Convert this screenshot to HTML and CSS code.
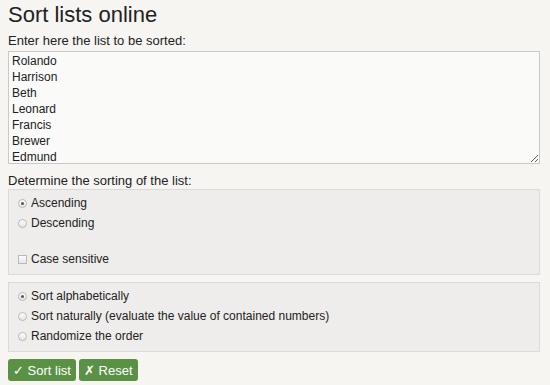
FILE: index.html
```html
<!DOCTYPE html>
<html lang="en">
<head>
  <meta charset="UTF-8">
  <meta name="viewport" content="width=device-width, initial-scale=1.0">
  <title>Sort lists online</title>
  <link rel="stylesheet" href="styles.css">
</head>
<body>
  <div class="page">
    <h1>Sort lists online</h1>
    <form id="sortForm">
      <label class="field-label" for="list">Enter here the list to be sorted:</label>
      <textarea id="list" name="list">Rolando
Harrison
Beth
Leonard
Francis
Brewer
Edmund</textarea>

      <div class="field-label sorting-label">Determine the sorting of the list:</div>
      <div class="panel">
        <label class="option"><input type="radio" name="order" value="asc" checked> Ascending</label>
        <label class="option"><input type="radio" name="order" value="desc"> Descending</label>
        <label class="option option-spaced"><input type="checkbox" name="case"> Case sensitive</label>
      </div>

      <div class="panel">
        <label class="option"><input type="radio" name="mode" value="alpha" checked> Sort alphabetically</label>
        <label class="option"><input type="radio" name="mode" value="natural"> Sort naturally (evaluate the value of contained numbers)</label>
        <label class="option"><input type="radio" name="mode" value="random"> Randomize the order</label>
      </div>

      <div class="buttons">
        <button type="submit">&#10003; Sort list</button>
        <button type="reset">&#10007; Reset</button>
      </div>
    </form>
  </div>
</body>
</html>
```

FILE: styles.css
```css
body {
  font-family: 'Liberation Sans', Arial, sans-serif;
  background-color: #f6f5f2;
  color: #222;
  margin: 0;
  padding: 0;
}

.page {
  width: 532px;
  padding: 0 8px;
}

h1 {
  font-size: 22px;
  font-weight: normal;
  line-height: 26px;
  margin: 2px 0 0;
}

.field-label {
  display: block;
  font-size: 13px;
  line-height: 16px;
  margin: 5px 0 2px;
}

.sorting-label {
  margin: 9px 0 0;
}

textarea {
  display: block;
  width: 100%;
  height: 113px;
  box-sizing: border-box;
  margin: 0;
  padding: 1px 3px;
  border: 1px solid #c9c9c9;
  background-color: #fafaf9;
  font-family: 'Liberation Sans', Arial, sans-serif;
  font-size: 12px;
  line-height: 16px;
  color: #222;
  overflow: hidden;
}

.panel {
  background-color: #eeedeb;
  border: 1px solid #dadada;
  padding: 3px 9px 5px;
  margin-bottom: 6px;
}

.panel + .panel {
  margin-top: 7px;
}

.option {
  display: flex;
  align-items: center;
  gap: 4px;
  height: 20px;
  font-size: 12px;
  color: #222;
}

.option-spaced {
  margin-top: 16px;
}

input[type="radio"],
input[type="checkbox"] {
  appearance: none;
  -webkit-appearance: none;
  width: 9px;
  height: 9px;
  margin: 0;
  border: 1px solid #b9b9b9;
  background: linear-gradient(#fdfdfd, #e6e6e6);
  box-sizing: border-box;
  position: relative;
}

input[type="radio"] {
  border-radius: 50%;
}

input[type="radio"]:checked::after {
  content: "";
  position: absolute;
  left: 2px;
  top: 2px;
  width: 3px;
  height: 3px;
  border-radius: 50%;
  background-color: #555;
}

.buttons {
  display: flex;
  gap: 3px;
  margin-top: 7px;
}

button {
  background-color: #5b9145;
  color: #fff;
  border: none;
  border-radius: 3px;
  height: 22px;
  padding: 0 5px;
  font-family: 'Liberation Sans', Arial, sans-serif;
  font-size: 13px;
  cursor: pointer;
}

button:hover {
  background-color: #4f803b;
}
```
